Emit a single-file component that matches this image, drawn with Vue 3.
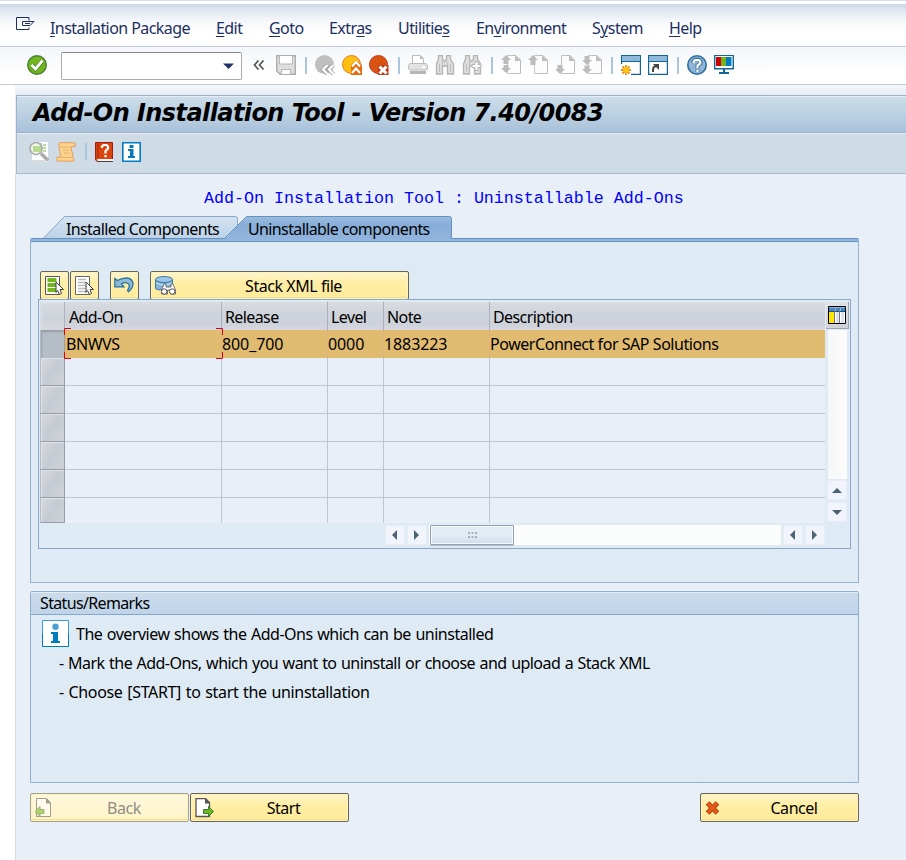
<script setup>
import { ref } from 'vue'

const command = ref('')
const activeTab = ref('uninstallable')

const menu = [
  { before: '', key: 'I', after: 'nstallation Package' },
  { before: '', key: 'E', after: 'dit' },
  { before: '', key: 'G', after: 'oto' },
  { before: 'Extr', key: 'a', after: 's' },
  { before: 'Utilitie', key: 's', after: '' },
  { before: 'En', key: 'v', after: 'ironment' },
  { before: 'S', key: 'y', after: 'stem' },
  { before: '', key: 'H', after: 'elp' }
]

const columns = ['Add-On', 'Release', 'Level', 'Note', 'Description']
const rows = ref([
  ['BNWVS', '800_700', '0000', '1883223', 'PowerConnect for SAP Solutions'],
  ...Array.from({ length: 6 }, () => ['', '', '', '', ''])
])
const selected = ref(0)

// arrows drawn beside the page icons: first, previous, next, last
const pages = [
  ['M5 0l5 5H7.500v4h-5V5H0z', 'M5 18l5-5H7.500v-3h-5v3H0z'],
  ['M5 0l5 5H7.500v5h-5V5H0z'],
  ['M2.500 10h5v4H10l-5 5-5-5h2.500z'],
  ['M2.500 1h5v4H10l-5 5-5-5h2.500z', 'M2.500 10.500h5V14H10l-5 5-5-5h2.500z']
]
</script>

<template>
  <div class="window">
    <nav class="menubar">
      <svg class="menu-icon" width="20" height="15" viewBox="0 0 20 15">
        <path d="M13 3.500V.500H.500v12H13v-2M6.500 4.500h11.500l-4 4H6.500z M9 6.500h5" fill="none" stroke="#1d2f62" />
      </svg>
      <span v-for="item in menu" :key="item.after" class="menu-item">{{ item.before }}<u>{{ item.key }}</u>{{ item.after }}</span>
    </nav>

    <div class="toolbar">
      <svg width="20" height="20" viewBox="0 0 20 20">
        <circle cx="10" cy="10" r="9.300" fill="#72b51c" stroke="#49803a" stroke-width="1.400" />
        <path d="M5 10.500l3.500 3.500L15.500 6" fill="none" stroke="#4b8a28" stroke-width="4.600" />
        <path d="M4.500 10l4 4L15.500 5.500" fill="none" stroke="#fff" stroke-width="2.800" />
      </svg>
      <div class="command">
        <input v-model="command">
        <svg width="11" height="6" viewBox="0 0 11 6"><path d="M0 .500h11L5.500 6z" fill="#203468" /></svg>
      </div>
      <svg class="chevrons" width="12" height="10" viewBox="0 0 12 10">
        <path d="M5.500.500L1.500 5l4 4.500M10.500.500l-4 4.500 4 4.500" fill="none" stroke="#555" stroke-width="1.700" />
      </svg>
      <svg width="20" height="20" viewBox="0 0 20 20">
        <path d="M.700.700h18.600v18.600H4L.700 16z" fill="#dedede" stroke="#adadad" stroke-width="1.400" />
        <path d="M3.500 1v8h13V1" fill="#fff" stroke="#b5b5b5" />
        <path d="M5.500 19v-4.500h9V19" fill="#fff" stroke="#b5b5b5" />
      </svg>
      <i class="sep"></i>
      <svg width="20" height="20" viewBox="0 0 20 20">
        <circle cx="9.500" cy="9.500" r="9.500" fill="#bfbfbf" />
        <path d="M12.500 10L8 14.500l4.500 4.500M18.500 10L14 14.500l4.500 4.500" fill="none" stroke="#999" stroke-width="3.800" />
        <path d="M12.500 10L8 14.500l4.500 4.500M18.500 10L14 14.500l4.500 4.500" fill="none" stroke="#fff" stroke-width="2.200" />
      </svg>
      <svg width="20" height="20" viewBox="0 0 20 20">
        <circle cx="9.500" cy="9.500" r="9" fill="#fdc010" stroke="#e87b14" />
        <path d="M9 10l5-5 6 5v10H9z" fill="#e36c10" />
        <path d="M10 11.500l4-4.500 4 4.500M10 18l4-4.500 4 4.500" fill="none" stroke="#fff" stroke-width="2.200" />
      </svg>
      <svg width="20" height="20" viewBox="0 0 20 20">
        <circle cx="9.500" cy="9.500" r="9" fill="#d95412" stroke="#bd3b12" />
        <path d="M9 10h10.500v10H9z" fill="#bd3b12" />
        <path d="M10.500 11.500l7 7M17.500 11.500l-7 7" stroke="#fff" stroke-width="3" />
      </svg>
      <i class="sep"></i>
      <svg width="20" height="20" viewBox="0 0 20 20">
        <path d="M4.500 9V.500H12l3.500 3.500v5" fill="#fff" stroke="#bbb" />
        <path d="M12 0v4h4z" fill="#bbb" />
        <path d="M2 8.500h16l1.500 2V14l-1.500 1H2L.500 14v-3.500z" fill="#e2e2e2" stroke="#bbb" />
        <path d="M14 11h3v2h-3z" fill="#fff" />
        <path d="M2 16h16v3H2z" fill="#b5b5b5" />
      </svg>
      <svg width="20" height="20" viewBox="0 0 20 20">
        <path d="M3.500.700h4V4l1.500 2h1l1.500-2V.700h4V4L18.500 9v10h-6v-8h-5v8h-6V9l2-5z" fill="#dedede" stroke="#b5b5b5" stroke-width="1.300" />
        <path d="M7.500 6v5M12 6v5M4.500 9v8M15.500 9v8" stroke="#bcbcbc" />
      </svg>
      <svg width="20" height="20" viewBox="0 0 20 20">
        <path d="M3.500.700h4V4l1.500 2h1l1.500-2V.700h4V4L18.500 9v10h-6v-8h-5v8h-6V9l2-5z" fill="#dedede" stroke="#b5b5b5" stroke-width="1.300" />
        <path d="M7.500 6v5M4.500 9v8" stroke="#bcbcbc" />
        <path d="M13 6.500h3v3h3v3h-3v3h-3v-3h-3v-3h3z" fill="#fff" stroke="#b5b5b5" />
      </svg>
      <i class="sep"></i>
      <svg v-for="(arrows, i) in pages" :key="i" width="20" height="20" viewBox="0 0 20 20">
        <path d="M11 .500h4L19.500 5v13.500H11" fill="#fdfdfe" stroke="#bbb" />
        <path d="M6.500 11V.500H11M6.500 11v7.500H11" fill="none" stroke="#c4c4c4" />
        <path d="M14 0v6h6z" fill="#bebebe" />
        <path v-for="d in arrows" :key="d" :d="d" fill="#bcbcbc" />
      </svg>
      <i class="sep"></i>
      <svg width="20" height="20" viewBox="0 0 20 20">
        <path d="M.600.600h18.800v18.800H.600z" fill="#fff" stroke="#156497" stroke-width="1.200" />
        <path d="M1 1h18v5H1z" fill="#8fb8da" />
        <path d="M1 6.500h18" stroke="#156497" />
        <path d="M0 9h10v11H0z" fill="#fff" />
        <path d="M5 10v10M0 15h10M1.500 11.500l7 7M8.500 11.500l-7 7" stroke="#ed8b12" stroke-width="1.800" />
        <circle cx="5" cy="15" r="3" fill="#ffc20e" />
      </svg>
      <svg width="20" height="20" viewBox="0 0 20 20">
        <path d="M.600.600h18.800v18.800H.600z" fill="#fff" stroke="#156497" stroke-width="1.200" />
        <path d="M1 1h18v5H1z" fill="#8fb8da" />
        <path d="M1 6.500h18" stroke="#156497" />
        <path d="M5 17v-2c0-3 2-4 4-4" fill="none" stroke="#444" stroke-width="2" />
        <path d="M5 9h6v6z" fill="#444" />
      </svg>
      <i class="sep"></i>
      <svg width="20" height="20" viewBox="0 0 20 20">
        <circle cx="10" cy="10" r="9.200" fill="#91b5d7" stroke="#2b6f9f" stroke-width="1.600" />
        <path d="M6.500 8V6.500L8 4.800h4L13.500 6.500v2L10.500 10.500v3M10.500 14.500V17" fill="none" stroke="#3a76a4" stroke-width="4" />
        <path d="M6.800 8V6.500L8 5.200h4L13.200 6.500v2L10.500 10.500v2.700M10.500 14.700v2.300" fill="none" stroke="#fff" stroke-width="2.200" />
      </svg>
      <svg width="20" height="20" viewBox="0 0 20 20">
        <path d="M.700.200h18.600v13.600H.700z" fill="#fff" stroke="#156497" stroke-width="1.400" />
        <path d="M2 2h5v9H2z" fill="#cc0000" />
        <path d="M7 2h5v9H7z" fill="#72b51c" />
        <path d="M12 2h5.500v9H12z" fill="#007cc0" />
        <path d="M7 14h2v3H5v2h10v-2h-4v-3h2" fill="#156497" />
      </svg>
    </div>

    <main class="screen">
      <h1 class="title">Add-On Installation Tool - Version 7.40/0083</h1>
      <div class="app-toolbar">
        <svg width="20" height="20" viewBox="0 0 20 20">
          <path d="M3 0h16v20H3z" fill="#fbfcfd" />
          <path d="M12 1v10M14 3h3M14 6h3M14 9h3" stroke="#a6cb82" stroke-width="1.500" />
          <path d="M3 19h13" stroke="#bbb" />
          <circle cx="7" cy="6.500" r="6" fill="#eef3ec" stroke="#aaa" stroke-width="1.700" />
          <path d="M4 4h8v6H4z" fill="#b9da91" />
          <path d="M12 11.500l7 7" stroke="#aaa" stroke-width="3.400" />
        </svg>
        <svg width="20" height="20" viewBox="0 0 20 20">
          <path d="M4 .700h13.500q2.500.500 1.500 4h-3.500q-1 2 .500 5t0 5.500h.500q2 1 1 4H1.500q-2-3.500 0-4H4q1-1.500 0-4.500T3.500 5q-2-3 .500-4.300z" fill="#fbd38a" stroke="#e2a970" stroke-width="1.200" />
          <path d="M4 5h11M7 8h6M8 11h6M4 15.500h11" stroke="#e9b26e" />
        </svg>
        <i class="sep"></i>
        <svg width="20" height="20" viewBox="0 0 20 20">
          <path d="M.500.500h17v19H2l-1.500-2z" fill="#d9450d" stroke="#a51d0d" />
          <path d="M2 17h16v2H2.500z" fill="#f5f5f5" />
          <path d="M2 19.500h16" stroke="#444" />
          <path d="M3 1v15" stroke="#a51d0d" />
          <path d="M7 6V4.500L8.500 3h3L13 4.500v2L10.500 9v2.500M10.500 13v2.300" fill="none" stroke="#fff" stroke-width="2.200" />
        </svg>
        <svg width="20" height="20" viewBox="0 0 20 20">
          <path d="M.800.800h17.400v18.400H.800z" fill="#fff" stroke="#007cc0" stroke-width="1.600" />
          <path d="M7.500 3h4v3h-4zM6 7h5.500v7H13v2H6v-2h2V9H6z" fill="#0878b8" />
        </svg>
      </div>

      <div class="body">
        <p class="subtitle">Add-On Installation Tool : Uninstallable Add-Ons</p>

        <div class="tabs">
          <button class="tab tab-installed" @click="activeTab = 'installed'">
            <svg width="196" height="22" viewBox="0 0 196 22">
              <defs>
                <linearGradient id="tabLight" x2="0" y2="1"><stop stop-color="#d3e2ef" /><stop offset="1" stop-color="#bdd3e9" /></linearGradient>
              </defs>
              <path d="M.500 23L22.500.500h171q2 0 2 2V23" fill="url(#tabLight)" stroke="#87a9ca" />
            </svg>
            <span>Installed Components</span>
          </button>
          <button class="tab tab-uninstallable" @click="activeTab = 'uninstallable'">
            <svg width="228" height="24" viewBox="0 0 228 24">
              <defs>
                <linearGradient id="tabDark" x2="0" y2="1"><stop stop-color="#9abcdf" /><stop offset=".4" stop-color="#86add8" /><stop offset="1" stop-color="#92b5de" /></linearGradient>
              </defs>
              <path d="M0 24L22.500.500h203q2 0 2 2V24" fill="url(#tabDark)" />
              <path d="M.500 22.500L22.500.500h203q2 0 2 2V22.500" fill="none" stroke="#6790bd" />
            </svg>
            <span>Uninstallable components</span>
          </button>
        </div>

        <section class="panel">
          <div class="grid-tools">
            <button class="btn square">
              <svg width="20" height="20" viewBox="0 0 20 20">
                <path d="M.500.500h14v18H.500z" fill="#fff" stroke="#555" />
                <path d="M2.500 2h9v4h-9zM2.500 7h9v4h-9zM2.500 12h9v4h-9z" fill="#72b51c" />
                <path d="M11 6l7.500 7.500H15l1.500 4-2 1-2-4-1.500 2z" fill="#fff" stroke="#444" />
              </svg>
            </button>
            <button class="btn square">
              <svg width="20" height="20" viewBox="0 0 20 20">
                <path d="M.500.500h14v18H.500z" fill="#fff" stroke="#666" />
                <path d="M3 3.500h8M3 6.500h8M3 9.500h8M3 12.500h8M3 15.500h8" stroke="#bbb" stroke-width="1.600" />
                <path d="M11 6l7.500 7.500H15l1.500 4-2 1-2-4-1.500 2z" fill="#fff" stroke="#444" />
              </svg>
            </button>
            <button class="btn square undo">
              <svg width="20" height="17" viewBox="0 0 20 17">
                <path d="M.800 1.500l2.500 2Q8 .800 13 .800q6 1 6 6.500 0 4-4.500 7.500l-1-1.500q2.500-3 1.500-6-3-3-7.500-.500l2.500 3H.800z" fill="#8ebad8" stroke="#236f9f" stroke-width="1.200" />
              </svg>
            </button>
            <button class="btn stack">
              <svg width="21" height="20" viewBox="0 0 21 20">
                <path d="M.500 3v9q0 2 7 2h8q2 0 2-2V3" fill="#85b2d9" stroke="#397ca9" />
                <ellipse cx="9" cy="3.500" rx="8.500" ry="3" fill="#9dc5e7" stroke="#397ca9" />
                <path d="M1 7q8 4 16 0" fill="none" stroke="#d8eaf4" />
                <path d="M9 8h2v3h5V8h2l2.500 6v4h-5v-4h-3v4h-6v-4z" fill="#fff" stroke="#555" stroke-width=".8" />
                <circle cx="9.200" cy="15.500" r="2.700" fill="#fff" stroke="#555" />
                <circle cx="17.200" cy="15.500" r="2.700" fill="#fff" stroke="#555" />
              </svg>
              <span>Stack XML file</span>
            </button>
          </div>

          <div class="table-frame">
            <div class="grid-area">
              <div class="row head">
                <div class="selector"></div>
                <div v-for="col in columns" :key="col" class="cell">{{ col }}</div>
              </div>
              <div v-for="(row, i) in rows" :key="i" class="row" :class="{ active: i === selected }">
                <div class="selector" @click="selected = i"></div>
                <div v-for="(value, c) in row" :key="c" class="cell" :class="{ number: c > 0 && c < 4 }">
                  {{ value }}
                  <svg v-if="i === selected && c === 0" class="focus" width="159" height="31" viewBox="0 0 159 31">
                    <path d="M.500 7V.500H7M152 .500h6.500V7M158.500 24v6.500H152M7 30.500H.500V24" fill="none" stroke="#e0001a" />
                  </svg>
                </div>
              </div>
              <div class="hscroll">
                <span class="arrow"><svg width="5" height="10" viewBox="0 0 5 10"><path d="M5 0v10L0 5z" /></svg></span>
                <span class="arrow"><svg width="5" height="10" viewBox="0 0 5 10"><path d="M0 0v10l5-5z" /></svg></span>
                <div class="track">
                  <div class="thumb">
                    <svg width="9" height="6" viewBox="0 0 9 6"><path d="M0 1h9M0 5h9" stroke="#8f9fae" stroke-width="1.500" stroke-dasharray="2 1.500" /></svg>
                  </div>
                </div>
                <span class="arrow"><svg width="5" height="10" viewBox="0 0 5 10"><path d="M5 0v10L0 5z" /></svg></span>
                <span class="arrow"><svg width="5" height="10" viewBox="0 0 5 10"><path d="M0 0v10l5-5z" /></svg></span>
              </div>
            </div>
            <div class="side">
              <div class="config">
                <svg width="18" height="18" viewBox="0 0 18 18">
                  <path d="M.500.500h17v17H.500z" fill="#fff" stroke="#000" />
                  <path d="M1 1h16v4H1z" fill="#4a83c5" />
                  <path d="M1 5.500h16" stroke="#0b5590" />
                  <path d="M1 6h5v11H1z" fill="#ffe600" />
                  <path d="M8 6h3v11H8zM13 6h3v11h-3z" fill="#dfe2ea" />
                  <path d="M6.500 1v16M11.500 1v16" stroke="#777" />
                  <path d="M1 1.500h16M7.500 1v4M12.500 1v4" stroke="#85b8e5" />
                </svg>
              </div>
              <div class="vtrack"></div>
              <span class="arrow"><svg width="10" height="5" viewBox="0 0 10 5"><path d="M0 5h10L5 0z" /></svg></span>
              <span class="arrow down"><svg width="10" height="5" viewBox="0 0 10 5"><path d="M0 0h10L5 5z" /></svg></span>
            </div>
          </div>
        </section>

        <section class="status">
          <h2>Status/Remarks</h2>
          <div class="remark-head">
            <svg width="27" height="27" viewBox="0 0 27 27">
              <path d="M.500.500h26v26H.500z" fill="#fff" stroke="#3d9bd0" />
              <path d="M.500 14v12.500h26V14" fill="none" stroke="#007cc0" />
              <circle cx="13.500" cy="6.800" r="3.200" fill="#4a9fd3" />
              <path d="M9 12h7v9h2v2H9v-2h2v-7H9z" fill="#007cc0" />
            </svg>
            <span>The overview shows the Add-Ons which can be uninstalled</span>
          </div>
          <p class="mark">- Mark the Add-Ons, which you want to uninstall or choose and upload a Stack XML</p>
          <p class="choose">- Choose [START] to start the uninstallation</p>
        </section>

        <div class="actions">
          <button class="btn wide back" disabled>
            <svg width="20" height="20" viewBox="0 0 20 20">
              <path d="M1.500 .500h10l4 4v14h-14z" fill="#fff" stroke="#555" />
              <path d="M11 0v5.500h5z" fill="#555" />
              <path d="M0 13.500l5-5v3h4v4H5v3z" fill="#72b51c" stroke="#477f2e" />
            </svg>
            <span>Back</span>
          </button>
          <button class="btn wide start">
            <svg width="20" height="20" viewBox="0 0 20 20">
              <path d="M1 .500h9.500l4 4v14H1z" fill="#fff" stroke="#555" stroke-width="1.300" />
              <path d="M10 0v5.500h5z" fill="#555" />
              <path d="M18.500 13.500l-5-5v3H8.500v4h5v3z" fill="#72b51c" stroke="#2e7d32" />
            </svg>
            <span>Start</span>
          </button>
          <button class="btn wide cancel">
            <svg width="15" height="14" viewBox="0 0 15 14">
              <path d="M2.500 2l10 10M12.500 2l-10 10" stroke="#b5401e" stroke-width="5" />
              <path d="M2.800 2.300l9.400 9.400M12.200 2.300l-9.400 9.400" stroke="#e45b12" stroke-width="3" />
            </svg>
            <span>Cancel</span>
          </button>
        </div>
      </div>
    </main>
  </div>
</template>

<style>
body {
  background: #fff;
}
</style>

<style scoped>
* {
  box-sizing: border-box;
}

.window {
  height: 860px;
  display: flex;
  flex-direction: column;
  overflow: hidden;
  font-family: "Noto Sans", "Open Sans", sans-serif;
  font-size: 16px;
  line-height: 20px;
  letter-spacing: -0.45px;
  color: #000;
}

svg {
  display: block;
  flex: none;
}

p, h1, h2 {
  margin: 0;
}

.menubar {
  height: 47px;
  padding: 10px 0 0 16px;
  display: grid;
  grid-template-columns: 34px 166px 53px 60px 69px 78px 116px 77px 60px;
  align-items: center;
  align-content: center;
  color: #1d2f62;
  letter-spacing: -0.57px;
  white-space: nowrap;
  border-top: 1px solid #d3dff0;
  border-bottom: 1px solid #c3cbd7;
  background: linear-gradient(#fff 0 3px, #cbd7e7 3px, #e3e9f2 10px, #f5f7fa 20px, #fff 32px);
}

.menu-icon {
  margin-top: -9px;
}

.menu-item {
  margin-top: -1px;
}

.menu-item u {
  text-underline-offset: 2px;
  text-decoration-thickness: 1px;
}

.toolbar {
  height: 38px;
  padding: 0 0 1px 27px;
  display: flex;
  align-items: center;
  gap: 7px;
  border-bottom: 1px solid #c3cbd7;
  background: linear-gradient(#f3f6fa, #fff 75%);
}

.command {
  width: 181px;
  height: 28px;
  margin: 2px 4px 0 7px;
  display: flex;
  align-items: center;
  padding-right: 7px;
  background: #fff;
  border: 1px solid #aaa;
  border-top-color: #888;
  border-radius: 2px;
}

.command input {
  flex: 1;
  min-width: 0;
  border: 0;
  background: none;
  outline: none;
}

.chevrons {
  margin-right: 4px;
}

.sep {
  flex: none;
  width: 5px;
  height: 17px;
  background: linear-gradient(90deg, transparent 2px, #a9c5e1 2px 4px, transparent 4px);
}

.screen {
  flex: 1;
  margin-left: 15px;
  padding-top: 10px;
  display: flex;
  flex-direction: column;
  background: linear-gradient(#f5f7fb, #e8edf5 10px, #e8eff6 10px);
}

.title {
  height: 38px;
  padding: 0 16px;
  margin-left: 1px;
  font-family: "DejaVu Sans", sans-serif;
  font-size: 24px;
  line-height: 35px;
  font-weight: bold;
  font-style: italic;
  letter-spacing: -0.58px;
  white-space: nowrap;
  border: 1px solid #9fb0c8;
  border-right: 0;
  box-shadow: inset 0 1px #e4edf5;
  background: linear-gradient(#cddeea, #a9c2da);
}

.app-toolbar {
  height: 41px;
  margin-left: 1px;
  padding: 0 0 3px 12px;
  display: flex;
  align-items: center;
  gap: 7px;
  border-left: 1px solid #a7b9cd;
  border-bottom: 1px solid #a7b9cd;
  box-shadow: inset 0 1px #e6eef5;
  background: #cfdce6;
}

.body {
  flex: 1;
  padding-left: 14px;
  border-left: 1px solid #d3dce9;
}

.subtitle {
  padding: 15px 0 0 174px;
  height: 42px;
  font-family: "Liberation Mono", monospace;
  font-size: 16.667px;
  letter-spacing: 0;
  color: #0000ff;
  white-space: nowrap;
}

.tabs {
  position: relative;
  z-index: 1;
  height: 22px;
  display: flex;
  padding-left: 12px;
}

.tab {
  position: relative;
  height: 24px;
  padding: 0;
  border: 0;
  background: none;
  font: inherit;
  letter-spacing: -0.62px;
  color: inherit;
  text-align: left;
  white-space: nowrap;
}

.tab svg {
  position: absolute;
  top: 0;
  left: 0;
}

.tab span {
  position: relative;
  padding-left: 24px;
  top: 1px;
}

.tab-installed {
  width: 196px;
}

.tab-uninstallable {
  width: 228px;
  margin-left: -14px;
}

.panel {
  width: 829px;
  height: 345px;
  padding: 32px 7px 0;
  border: 1px solid #93b1d1;
  border-top-color: #6790bd;
  border-radius: 2px 2px 0 0;
  box-shadow: inset 0 2px #92b5de, inset 0 3px #6790bd;
  background: #deebf5;
}

.grid-tools {
  display: flex;
  height: 28px;
  padding-left: 2px;
  gap: 1px;
}

.btn {
  display: flex;
  align-items: center;
  height: 29px;
  padding: 0 4px;
  font: inherit;
  letter-spacing: inherit;
  color: #000;
  border: 1px solid #68655b;
  border-radius: 2px;
  box-shadow: inset 0 0 0 1px #fff3bd, inset 0 -3px 1px -1px #efdf93;
  background: linear-gradient(#fff5cf, #ffeea5 40%, #ffeb9b);
}

.btn span {
  flex: 1;
  text-align: center;
  white-space: nowrap;
}

.square {
  width: 29px;
}

.undo {
  margin: 0 10px;
  padding-left: 3px;
}

.stack {
  width: 259px;
}

.stack span {
  padding-left: 7px;
}

.table-frame {
  width: 813px;
  height: 250px;
  position: relative;
  display: flex;
  padding: 2px 1px 0;
  border: 1px solid #8aa8ca;
  background: #deebf5;
}

.grid-area {
  width: 785px;
}

.row {
  display: grid;
  grid-template-columns: 25px 157px 106px 56px 106px 335px;
  height: 28px;
}

.row:nth-child(8) {
  height: 25px;
}

.cell {
  position: relative;
  padding-left: 1px;
  line-height: 28px;
  white-space: nowrap;
  background: #e8eff6;
  border-right: 1px solid #bcc7d5;
  border-bottom: 1px solid #bcc7d5;
}

.cell:nth-child(n + 3) {
  padding-left: 0;
}

.cell:last-child {
  border-right: 0;
}

.number {
  letter-spacing: -0.1px;
}

.row:nth-child(8) .cell {
  border-bottom: 0;
}

.active .cell {
  background: #e1bb70;
  border-right-color: #d9b783;
}

.head .cell {
  padding-left: 4px;
  line-height: 30px;
  letter-spacing: -0.6px;
  border-right-color: #a9b0bb;
  border-bottom-color: #aab5c3;
  background: linear-gradient(#d9dde1, #ced2da 40%, #ced2da 75%, #dadde1);
}

.head .cell:nth-child(n + 3) {
  padding-left: 3px;
}

.selector {
  border: 1px solid #9a9fa7;
  border-top: 0;
  border-left-color: #b7bdc5;
  box-shadow: inset 1px 1px 1px #dfe3e7;
  background: linear-gradient(120deg, #d7dade, #c6cad2 50%, #cfd3d9);
}

.head .selector {
  border-color: #d4d9df #aeb4bd #a0a6b0 #d4d9df;
  background: linear-gradient(#d9dde1, #ced2da 50%, #d6d9de);
}

.active .selector {
  box-shadow: inset 1px 2px 2px #959daa;
  background: #b5bdc7;
}

.focus {
  position: absolute;
  left: -1px;
  top: -2px;
  z-index: 1;
}

.hscroll {
  display: flex;
  gap: 2px;
  padding: 2px 0 0 345px;
}

.arrow {
  width: 20px;
  height: 20px;
  flex: none;
  display: flex;
  align-items: center;
  justify-content: center;
  background: #f1f5fb;
  border: 1px solid #e6edf5;
}

.hscroll .arrow {
  padding-right: 1px;
}

.arrow path {
  fill: #4d6272;
}

.track {
  flex: 1;
  height: 20px;
  padding-left: 1px;
  background: #fbfcfc;
}

.thumb {
  width: 84px;
  height: 20px;
  display: flex;
  align-items: center;
  justify-content: center;
  border: 1px solid #93a3b4;
  border-radius: 1px;
  box-shadow: inset 0 0 0 1px #f3f7fa, 0 1px #b4bdc7;
  background: linear-gradient(#e3ecf5 50%, #d0dee9);
}

.side {
  display: flex;
  flex-direction: column;
  align-items: flex-start;
  gap: 1px;
  margin-left: 1px;
  width: 23px;
}

.side .arrow {
  margin-left: 1px;
}

.side .down {
  margin-top: 1px;
}

.config {
  width: 23px;
  height: 27px;
  padding: 4px 0 0 2px;
  background: linear-gradient(#dfe3e7, #cfd3da);
  border-right: 1px solid #9da5af;
  border-bottom: 1px solid #9da5af;
}

.vtrack {
  width: 19px;
  height: 149px;
  margin-left: 2px;
  background: linear-gradient(90deg, #f6f7f8, #fcfcfc);
}

.status {
  width: 829px;
  height: 192px;
  margin-top: 8px;
  letter-spacing: -0.5px;
  word-spacing: 0.9px;
  border: 1px solid #8fb0d1;
  border-radius: 2px 2px 0 0;
  background: #deeaf4;
}

.status h2 {
  height: 23px;
  padding-left: 9px;
  font-size: 16px;
  line-height: 23px;
  font-weight: normal;
  letter-spacing: -0.65px;
  border-bottom: 1px solid #86a6cb;
  box-shadow: inset 0 1px #e2ecf5;
  background: linear-gradient(#cddcea, #bfd4ea);
}

.remark-head {
  display: flex;
  align-items: center;
  gap: 7px;
  padding: 5px 0 0 11px;
  margin-bottom: 6px;
}

.status p {
  padding-left: 28px;
  line-height: 20px;
  margin-bottom: 9px;
}

.status .mark {
  letter-spacing: -0.55px;
}

.status .choose {
  letter-spacing: -0.34px;
}

.actions {
  display: flex;
  gap: 1px;
  width: 829px;
  margin-top: 10px;
}

.wide {
  width: 159px;
}

.wide span {
  padding-left: 8px;
}

.back {
  color: #8f8f87;
  border-color: #a5a192;
  background: linear-gradient(#fff8df, #fff3c5);
}

.back span {
  padding-left: 9px;
}

.back svg {
  opacity: 0.55;
}

.cancel {
  margin-left: auto;
}

.cancel span {
  padding-left: 14px;
}
</style>
